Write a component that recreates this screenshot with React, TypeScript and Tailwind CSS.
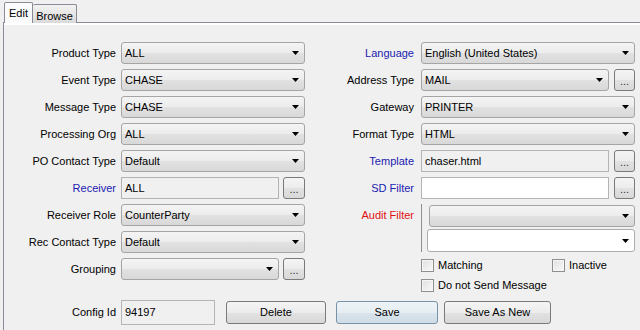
const GRAD =
  "bg-[linear-gradient(to_bottom,#f4f4f4_0%,#ececec_50%,#e2e2e2_50%,#d8d8d8_100%)]";

const Arrow = () => (
  <svg width="7" height="4" viewBox="0 0 7 4" className="ml-auto mr-[5px] shrink-0">
    <polygon points="0,0 7,0 3.5,4" fill="#000" />
  </svg>
);

const Combo = ({ value = "", w, white = false, h = 22 }: { value?: string; w: number; white?: boolean; h?: number }) => (
  <div
    className={`flex shrink-0 items-center rounded-[3px] border pl-[3px] ${
      white ? "border-[#acacac] bg-white" : `border-[#a5a5a5] ${GRAD}`
    }`}
    style={{ width: w, height: h }}
  >
    <span className="truncate">{value}</span>
    <Arrow />
  </div>
);

const Field = ({ value = "", w, white = false, h = 22 }: { value?: string; w: number; white?: boolean; h?: number }) => (
  <div
    className={`flex shrink-0 items-center border border-[#b4b4b4] pl-[3px] ${white ? "bg-white" : "bg-[#f0f0f0]"}`}
    style={{ width: w, height: h }}
  >
    {value}
  </div>
);

const Dots = ({ w = 22 }: { w?: number }) => (
  <div
    className={`flex h-[22px] shrink-0 items-end justify-center rounded-[3px] border border-[#7a7a7a] pb-[3px] text-[11px] leading-[11px] text-[#333] ${GRAD}`}
    style={{ width: w }}
  >
    ...
  </div>
);

const Row = ({
  label,
  color = "text-black",
  labelW,
  children,
}: {
  label: string;
  color?: string;
  labelW: number;
  children: React.ReactNode;
}) => (
  <div className="flex h-[22px] items-center">
    <div className={`shrink-0 text-right ${color}`} style={{ width: labelW, paddingRight: labelW === 117 ? 5 : 7 }}>
      {label}
    </div>
    {children}
  </div>
);

const Check = ({ label }: { label: string }) => (
  <div className="flex h-[13px] items-center">
    <div className="h-[13px] w-[13px] shrink-0 border border-[#8e8f8f] bg-[linear-gradient(135deg,#e0e0e0,#f9f9f9)] shadow-[inset_0_0_0_1px_#f6f6f6]" />
    <span className="ml-[4px]">{label}</span>
  </div>
);

const Btn = ({ label, w, ml, blue = false }: { label: string; w: number; ml: number; blue?: boolean }) => (
  <div
    className={`mt-[1px] flex h-[23px] shrink-0 items-center justify-center rounded-[3px] border ${
      blue
        ? "border-[#7893a8] bg-[linear-gradient(to_bottom,#eef3f6_0%,#e6eef3_50%,#d9e4ec_50%,#d0dde6_100%)]"
        : `border-[#7a7a7a] ${GRAD}`
    }`}
    style={{ width: w, marginLeft: ml }}
  >
    {label}
  </div>
);

export default function App() {
  return (
    <div className="h-[330px] w-[640px] overflow-hidden bg-[#f0f0f0] font-['Liberation_Sans',Arial,sans-serif] text-[11px] text-black">
      <div className="flex h-[23px] items-end pl-[4px]">
        <div className="relative z-10 flex h-[21px] w-[29px] justify-center rounded-t-[2px] border border-b-0 border-[#898c95] bg-[#fbfbfb] pt-[2px]">
          Edit
        </div>
        <div className="flex h-[19px] w-[44px] justify-center rounded-t-[2px] border border-b-0 border-l-0 border-[#898c95] bg-[linear-gradient(to_bottom,#f2f2f2,#dadada)] pt-[3px]">
          Browse
        </div>
      </div>
      <div className="-mt-px ml-[3px] h-[320px] border-l border-t border-[#898c95]">
        <div className="border-t-2 border-white pt-[17px]">
          <div className="flex">
            <div className="flex flex-col gap-[5px]">
              <Row label="Product Type" labelW={117}><Combo value="ALL" w={184} /></Row>
              <Row label="Event Type" labelW={117}><Combo value="CHASE" w={184} /></Row>
              <Row label="Message Type" labelW={117}><Combo value="CHASE" w={184} /></Row>
              <Row label="Processing Org" labelW={117}><Combo value="ALL" w={184} /></Row>
              <Row label="PO Contact Type" labelW={117}><Combo value="Default" w={184} /></Row>
              <Row label="Receiver" color="text-[#2020b0]" labelW={117}>
                <Field value="ALL" w={158} />
                <div className="ml-[4px]"><Dots /></div>
              </Row>
              <Row label="Receiver Role" labelW={117}><Combo value="CounterParty" w={184} /></Row>
              <Row label="Rec Contact Type" labelW={117}><Combo value="Default" w={184} /></Row>
              <Row label="Grouping" labelW={117}>
                <Combo w={158} />
                <div className="ml-[4px]"><Dots /></div>
              </Row>
            </div>
            <div className="flex flex-col gap-[5px]">
              <Row label="Language" color="text-[#2020b0]" labelW={116}><Combo value="English (United States)" w={214} /></Row>
              <Row label="Address Type" labelW={116}>
                <Combo value="MAIL" w={188} />
                <div className="ml-[5px]"><Dots w={21} /></div>
              </Row>
              <Row label="Gateway" labelW={116}><Combo value="PRINTER" w={214} /></Row>
              <Row label="Format Type" labelW={116}><Combo value="HTML" w={214} /></Row>
              <Row label="Template" color="text-[#2020b0]" labelW={116}>
                <Field value="chaser.html" w={188} />
                <div className="ml-[5px]"><Dots w={21} /></div>
              </Row>
              <Row label="SD Filter" color="text-[#2020b0]" labelW={116}>
                <Field w={188} white />
                <div className="ml-[5px]"><Dots w={21} /></div>
              </Row>
              <div className="flex">
                <div className="flex h-[22px] w-[116px] shrink-0 items-center justify-end pr-[7px] text-[#e01010]">
                  Audit Filter
                </div>
                <div className="flex h-[48px] flex-col border-l border-[#909090]">
                  <div className="ml-[7px] mt-[1px]"><Combo w={206} /></div>
                  <div className="ml-[5px] mt-[2px]"><Combo w={208} h={23} white /></div>
                </div>
              </div>
              <div className="ml-[116px] mt-[2px] flex flex-col gap-[7px]">
                <div className="flex">
                  <div className="w-[131px]"><Check label="Matching" /></div>
                  <Check label="Inactive" />
                </div>
                <Check label="Do not Send Message" />
              </div>
            </div>
          </div>
          <div className="mt-[8px] flex items-start">
            <div className="flex h-[25px] w-[117px] shrink-0 items-center justify-end pr-[5px]">Config Id</div>
            <Field value="94197" w={94} h={25} />
            <Btn label="Delete" w={100} ml={11} />
            <Btn label="Save" w={102} ml={10} blue />
            <Btn label="Save As New" w={107} ml={6} />
          </div>
        </div>
      </div>
    </div>
  );
}
